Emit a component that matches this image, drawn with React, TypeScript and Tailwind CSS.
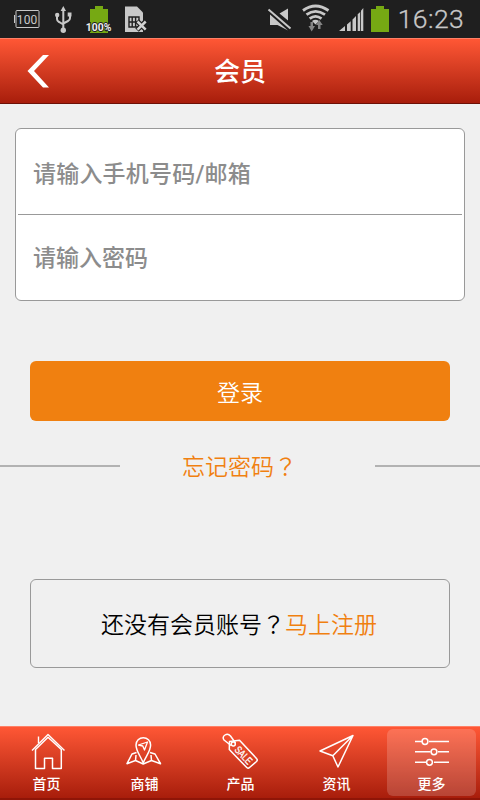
import type { ReactNode } from 'react';

type Tab = {
  name: string,
  icon: ReactNode,
  active?: boolean,
  labelClass?: string,
}

const tabs: Tab[] = [
  {
    name: '首页',
    labelClass: '-translate-x-px',
    icon: (
      <>
        <path d="M4 18.5 L20 2.5 L36.5 18.5" strokeWidth="1.4" />
        <path d="M7.5 17.5 V36.5 H16.5 V26.3 H24.5 V36.5 H33.3 V17.5 L20 5.2 Z" />
        <path d="M10.5 11 V4.5" strokeWidth="1.4" />
      </>
    ),
  },
  {
    name: '商铺',
    labelClass: 'translate-x-px',
    icon: (
      <>
        <path d="M19.2 31 C17 24.5 12 19.5 12 13 A7.3 7.3 0 0 1 26.6 13 C26.6 19.5 21.5 24.5 19.2 31 Z" />
        <path d="M14.5 13 L23.5 10 L20.5 18 L18.8 14 Z" strokeWidth="1.3" />
        <path d="M12.5 20.5 L8 22 L3 31.7 L11.5 28.5 L19.2 32 L27.5 28.5 L36.5 31.7 L31 22 L26 20.5 M12 23 L11.5 28.5 M27 23 L27.5 28.5" />
      </>
    ),
  },
  {
    name: '产品',
    labelClass: 'translate-x-px',
    icon: (
      <>
        <path d="M9.5 9.5 L19.5 8.3 L36.5 26.5 Q38 28 36.5 29.5 L29.5 35.5 Q28 37 26.5 35.3 L9.3 17.5 Z" />
        <path d="M11 13.5 L4 8 Q2 5 5 3 Q8 1 10.5 4 L15.5 11" />
        <circle cx="13.3" cy="12" r="2" />
        <text x="0" y="0" transform="translate(14 18.2) rotate(47) scale(.76 1)" fill="white" stroke="white" strokeWidth="0.3" fontSize="10.5" fontFamily="Liberation Sans, sans-serif">SALE</text>
      </>
    ),
  },
  {
    name: '资讯',
    labelClass: 'translate-x-px',
    icon: (
      <path d="M4 19 L37 3.5 L22 35 L16.8 23.8 Z M37 3.5 L16.8 23.8" />
    ),
  },
  {
    name: '更多',
    active: true,
    icon: (
      <>
        <path d="M3 9.5 H10 M17 9.5 H37 M3 19.8 H18.5 M26 19.8 H37 M3 30.3 H14 M22 30.3 H37" strokeWidth="1.6" />
        <circle cx="13" cy="9.5" r="2.9" />
        <circle cx="22" cy="19.8" r="2.9" />
        <circle cx="17.5" cy="30.3" r="2.9" />
      </>
    ),
  },
];

function StatusBar() {
  return (
    <div className="flex h-[38px] w-full justify-between bg-[#1f1f1f]">
      <svg width="160" height="38" viewBox="0 0 160 38">
        {/* battery level */}
        <rect x="16" y="10.5" width="23" height="17" rx="1" fill="none" stroke="#c8c8c8" />
        <path d="M14.5 15 V23" stroke="#c8c8c8" />
        <text x="16.8" y="24" fontSize="12" textLength="20.5" fill="#c8c8c8" fontFamily="Roboto, sans-serif">100</text>
        {/* usb */}
        <g stroke="#c8c8c8" strokeWidth="2" fill="none">
          <path d="M63.3 9 V31 M57 15.5 V19 Q57 21 59 22 L63.3 24.5 M70 15 V18 Q70 20 68 21 L63.3 23.5" />
          <path d="M63.3 6 L66 11 H60.6 Z M67.7 12.5 H71.5 V16.5 H67.7 Z" fill="#c8c8c8" stroke="none" />
          <circle cx="57.2" cy="15" r="2.2" fill="#c8c8c8" stroke="none" />
          <circle cx="63.3" cy="30.2" r="2.7" fill="#c8c8c8" stroke="none" />
        </g>
        <path d="M90 9 H95 V6 H103 V9 H108 V33 H90 Z" fill="#76a913" />
        <text x="85.8" y="31.3" fontSize="11" fontWeight="bold" textLength="25.5" lengthAdjust="spacingAndGlyphs" fill="#eee" stroke="#1f1f1f" strokeWidth="2" paintOrder="stroke" fontFamily="Roboto, sans-serif">100%</text>
        {/* no sim */}
        <path d="M125 6.5 H137 L143 12.5 V32 H125 Z" fill="#c8c8c8" />
        <path d="M129 17 H139 V27 H129 Z M132.2 17 V27 M135.6 17 V27 M129 22 H139" fill="none" stroke="#1f1f1f" strokeWidth="1.4" />
        <path d="M137 21 L146 30 M146 21 L137 30" stroke="#1f1f1f" strokeWidth="5" />
        <path d="M137.5 21.5 L145.7 29.7 M145.7 21.5 L137.5 29.7" stroke="#d2d2d2" strokeWidth="2.5" />
      </svg>
      <svg width="225" height="38" viewBox="255 0 225 38">
        {/* muted speaker */}
        <path d="M270 14.5 L288 30.5 L277.5 25 H270 Z M279.5 13.5 L288 8.5 V20.5 Z" fill="#c8c8c8" />
        <path d="M268.5 9.5 L290.5 28.5" stroke="#1f1f1f" strokeWidth="4" />
        <path d="M268.5 9.5 L290.5 28.5" stroke="#c8c8c8" strokeWidth="2" />
        {/* wifi */}
        <g fill="none" stroke="#c8c8c8" strokeWidth="2.8">
          <path d="M303 10.5 Q315.5 1.5 328.5 10.5 M306.5 14.7 Q315.5 8 325 14.7 M309.7 18.7 Q315.5 14 321.5 18.7" />
          <path d="M312 21 Q315.5 18.5 319 21 L315.5 24.5 Z" fill="#c8c8c8" stroke="none" />
        </g>
        <path d="M310.5 22 H313 V26 H315 L311.7 31.5 L308.5 26 H310.5 Z M318 29 H320.5 V25 H322.7 L319.3 20 L316 25 H318 Z" fill="#858585" />
        <path d="M339 31 L345 26 V31 Z M347 31 V24.5 L350.7 21.2 V31 Z M352.5 31 V19.5 L356 16 V31 Z M357.7 31 V14.3 L360.2 12 V31 Z M361 31 V10.8 L363.3 8 V31 Z" fill="#c8c8c8" />
        <path d="M371 9 H376 V6 H384 V9 H389 V32 H371 Z" fill="#76a913" />
        <text x="397.7" y="28" fontSize="26.5" textLength="66" fill="#c8c8c8" fontFamily="Roboto, sans-serif" fontWeight="300" stroke="#c8c8c8" strokeWidth="0.3">16:23</text>
      </svg>
    </div>
  );
}

function Header() {
  return (
    <header className="grid h-[66px] w-full grid-cols-[80px_1fr_80px] items-center border-t border-b border-t-[#ff8066] border-b-[#6d1006] bg-linear-to-b from-[#ff5735] to-[#a81d0b] text-white">
      <svg width="80" height="64" viewBox="0 0 80 64">
        <path d="M43 16 H49 L34 32 L49 48.5 H43 L27.5 32 Z" fill="white" />
      </svg>
      <h1 className="pt-0.5 text-center text-[26px] leading-none font-medium">会员</h1>
    </header>
  );
}

function TabBar() {
  return (
    <nav className="grid h-[74px] w-full shrink-0 grid-cols-5 border-t border-b-2 border-t-[#ff8066] border-b-[#8f1507] bg-linear-to-b from-[#ff5735] to-[#a81d0b] text-white">
      {tabs.map((tab) => (
        <div key={tab.name} className={`mt-0.5 ml-[3px] mr-1 mb-0.5 flex flex-col items-center rounded-md ${tab.active ? 'bg-white/17' : ''}`}>
          <svg className="mt-[3px]" width="40" height="40" viewBox="0 0 40 40" fill="none" stroke="white" strokeWidth="1.5" strokeLinejoin="round">
            {tab.icon}
          </svg>
          <span className={`mt-1 text-sm leading-4 font-medium ${tab.labelClass ?? ''}`}>{tab.name}</span>
        </div>
      ))}
    </nav>
  );
}

export default function App() {
  return (
    <div className="flex h-[800px] w-[480px] flex-col bg-[#f0f0f0] font-['Roboto','Noto_Sans_CJK_SC',sans-serif]">
      <StatusBar />
      <Header />
      <main className="flex flex-1 flex-col text-[23px] leading-none">
        <div className="mx-[15px] mt-6 flex h-[173px] flex-col rounded-md border border-[#999] bg-white px-0.5">
          <input className="h-[86px] w-full border-b border-[#999] px-[15px] pt-[5px] font-medium tracking-[0.2px] outline-none placeholder:text-[#8c8c8c]" placeholder="请输入手机号码/邮箱" />
          <input type="password" className="h-[85px] w-full px-[15px] pt-0.5 font-medium outline-none placeholder:text-[#8c8c8c]" placeholder="请输入密码" />
        </div>
        <button className="mx-[30px] mt-[60px] h-[60px] shrink-0 rounded-md bg-[#f08010] font-['Noto_Sans_CJK_SC'] font-[350] text-white">登录</button>
        <div className="mt-[30px] flex h-[30px] items-center">
          <span className="h-0.5 w-[120px] bg-[#b2b2b2]" />
          <a className="-mt-0.5 w-[255px] pl-[62px] font-['Noto_Sans_CJK_SC'] font-[350] text-[#f08010]">忘记密码<span className="font-['Noto_Sans_CJK_TC']">？</span></a>
          <span className="h-0.5 w-[105px] bg-[#b2b2b2]" />
        </div>
        <div className="mx-[30px] mt-[98px] flex h-[89px] items-center justify-center rounded-md border border-[#999] pr-0.5 font-['Noto_Sans_CJK_SC'] font-[350]">
          <p className="text-black">还没有会员账号<span className="font-['Noto_Sans_CJK_TC']">？</span></p>
          <a className="text-[#f08010]">马上注册</a>
        </div>
      </main>
      <TabBar />
    </div>
  );
}
